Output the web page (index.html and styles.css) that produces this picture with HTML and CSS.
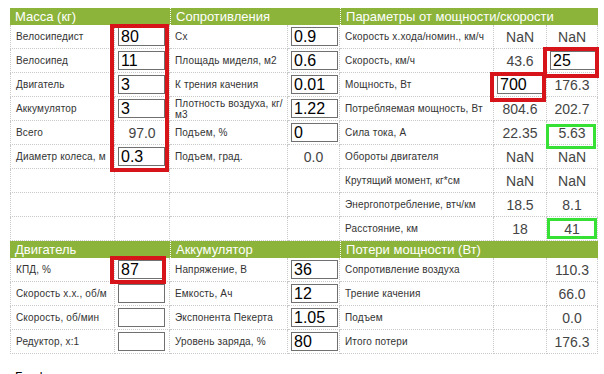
FILE: index.html
```html
<!DOCTYPE html>
<html lang="ru">
<head>
  <meta charset="UTF-8">
  <title>Калькулятор электровелосипеда</title>
  <link rel="stylesheet" href="styles.css">
</head>
<body>
  <div class="calc">
    <table class="grid">
      <colgroup>
        <col class="w-label1"><col class="w-in1">
        <col class="w-label2"><col class="w-in2">
        <col class="w-label3"><col class="w-val"><col class="w-val2">
      </colgroup>
      <tr class="head">
        <th colspan="2">Масса (кг)</th>
        <th colspan="2">Сопротивления</th>
        <th colspan="3">Параметры от мощности/скорости</th>
      </tr>
      <tr>
        <td>Велосипедист</td><td class="in"><input type="text" value="80"></td>
        <td>Cx</td><td class="in"><input type="text" value="0.9"></td>
        <td>Скорость х.хода/номин., км/ч</td><td class="num">NaN</td><td class="num">NaN</td>
      </tr>
      <tr>
        <td>Велосипед</td><td class="in"><input type="text" value="11"></td>
        <td>Площадь миделя, м2</td><td class="in"><input type="text" value="0.6"></td>
        <td>Скорость, км/ч</td><td class="num">43.6</td><td class="in"><input type="text" value="25"></td>
      </tr>
      <tr>
        <td>Двигатель</td><td class="in"><input type="text" value="3"></td>
        <td>К трения качения</td><td class="in"><input type="text" value="0.01"></td>
        <td>Мощность, Вт</td><td class="in"><input type="text" value="700"></td><td class="num">176.3</td>
      </tr>
      <tr>
        <td>Аккумулятор</td><td class="in"><input type="text" value="3"></td>
        <td class="two"><span class="nw">Плотность воздуха, кг/</span> м3</td><td class="in"><input type="text" value="1.22"></td>
        <td>Потребляемая мощность, Вт</td><td class="num">804.6</td><td class="num">202.7</td>
      </tr>
      <tr>
        <td>Всего</td><td class="num">97.0</td>
        <td>Подъем, %</td><td class="in"><input type="text" value="0"></td>
        <td>Сила тока, А</td><td class="num">22.35</td><td class="num">5.63</td>
      </tr>
      <tr>
        <td>Диаметр колеса, м</td><td class="in"><input type="text" value="0.3"></td>
        <td>Подъем, град.</td><td class="num">0.0</td>
        <td>Обороты двигателя</td><td class="num">NaN</td><td class="num">NaN</td>
      </tr>
      <tr>
        <td></td><td></td><td></td><td></td>
        <td>Крутящий момент, кг*см</td><td class="num">NaN</td><td class="num">NaN</td>
      </tr>
      <tr>
        <td></td><td></td><td></td><td></td>
        <td>Энергопотребление, втч/км</td><td class="num">18.5</td><td class="num">8.1</td>
      </tr>
      <tr>
        <td></td><td></td><td></td><td></td>
        <td>Расстояние, км</td><td class="num">18</td><td class="num">41</td>
      </tr>
      <tr class="head">
        <th colspan="2">Двигатель</th>
        <th colspan="2">Аккумулятор</th>
        <th colspan="3">Потери мощности (Вт)</th>
      </tr>
      <tr>
        <td>КПД, %</td><td class="in"><input type="text" value="87"></td>
        <td>Напряжение, В</td><td class="in"><input type="text" value="36"></td>
        <td>Сопротивление воздуха</td><td></td><td class="num">110.3</td>
      </tr>
      <tr>
        <td>Скорость х.х., об/м</td><td class="in"><input type="text" value=""></td>
        <td>Емкость, Ач</td><td class="in"><input type="text" value="12"></td>
        <td>Трение качения</td><td></td><td class="num">66.0</td>
      </tr>
      <tr>
        <td>Скорость, об/мин</td><td class="in"><input type="text" value=""></td>
        <td>Экспонента Пекерта</td><td class="in"><input type="text" value="1.05"></td>
        <td>Подъем</td><td></td><td class="num">0.0</td>
      </tr>
      <tr>
        <td>Редуктор, х:1</td><td class="in"><input type="text" value=""></td>
        <td>Уровень заряда, %</td><td class="in"><input type="text" value="80"></td>
        <td>Итого потери</td><td></td><td class="num">176.3</td>
      </tr>
    </table>
    <p class="after">Графики</p>

    <!-- пометки поверх таблицы -->
    <div class="mark red m-mass"></div>
    <div class="mark red m-kpd"></div>
    <div class="mark red m-speed"></div>
    <div class="mark red m-power"></div>
    <div class="mark green m-current"></div>
    <div class="mark green m-dist"></div>
  </div>
</body>
</html>
```

FILE: styles.css
```css
* { margin: 0; padding: 0; box-sizing: border-box; }
body { font-family: "Liberation Sans", Arial, sans-serif; background: #fff; color: #333; }
.calc { position: relative; padding: 8px 0 0 10px; width: 604px; height: 374px; overflow: hidden; }

.grid { table-layout: fixed; width: 588px; border-collapse: separate; border-spacing: 0; }
.w-label1 { width: 105px; }
.w-in1 { width: 55px; }
.w-label2 { width: 118px; }
.w-in2 { width: 52px; }
.w-label3 { width: 154px; }
.w-val { width: 53px; }
.w-val2 { width: 51px; }

.head th {
  background: #8cb43a; color: #fff; font-weight: normal; font-size: 13px;
  text-align: left; height: 17px; padding: 0 5px; line-height: 17px;
  border-left: 1px dotted #fff; white-space: nowrap;
}
.head th:first-child { border-left: none; }

td {
  height: 24px; font-size: 10px; line-height: 12px; padding: 0 2px 0 5px;
  border-right: 1px dotted #c9c9c9; border-bottom: 1px dotted #c9c9c9;
  vertical-align: middle; letter-spacing: 0.15px;
}
tr td:first-child { border-left: 1px dotted #c9c9c9; }
td.two { line-height: 11px; }
.nw { white-space: nowrap; }
td.in { padding: 0 2px 0 3px; }
td.num { text-align: center; font-size: 14px; color: #444; padding: 0; letter-spacing: 0; }

input[type="text"] {
  width: 47px; height: 19px; border: 1px solid #707070; background: #fff;
  font-family: "Liberation Sans", Arial, sans-serif; font-size: 16px; color: #000;
  padding: 0 2px; display: block;
}

.after { font-size: 13px; color: #000; margin: 15px 0 0 5px; }

.mark { position: absolute; }
.mark.red { border: 4px solid #d8141b; }
.mark.green { border: 3px solid #36e034; }
.m-mass { left: 110px; top: 24px; width: 59px; height: 148px; }
.m-kpd { left: 110px; top: 256px; width: 56px; height: 28px; }
.m-speed { left: 543px; top: 47px; width: 56px; height: 31px; }
.m-power { left: 490px; top: 72px; width: 56px; height: 30px; }
.m-current { left: 546px; top: 124px; width: 50px; height: 25px; }
.m-dist { left: 547px; top: 218px; width: 50px; height: 21px; }
```
